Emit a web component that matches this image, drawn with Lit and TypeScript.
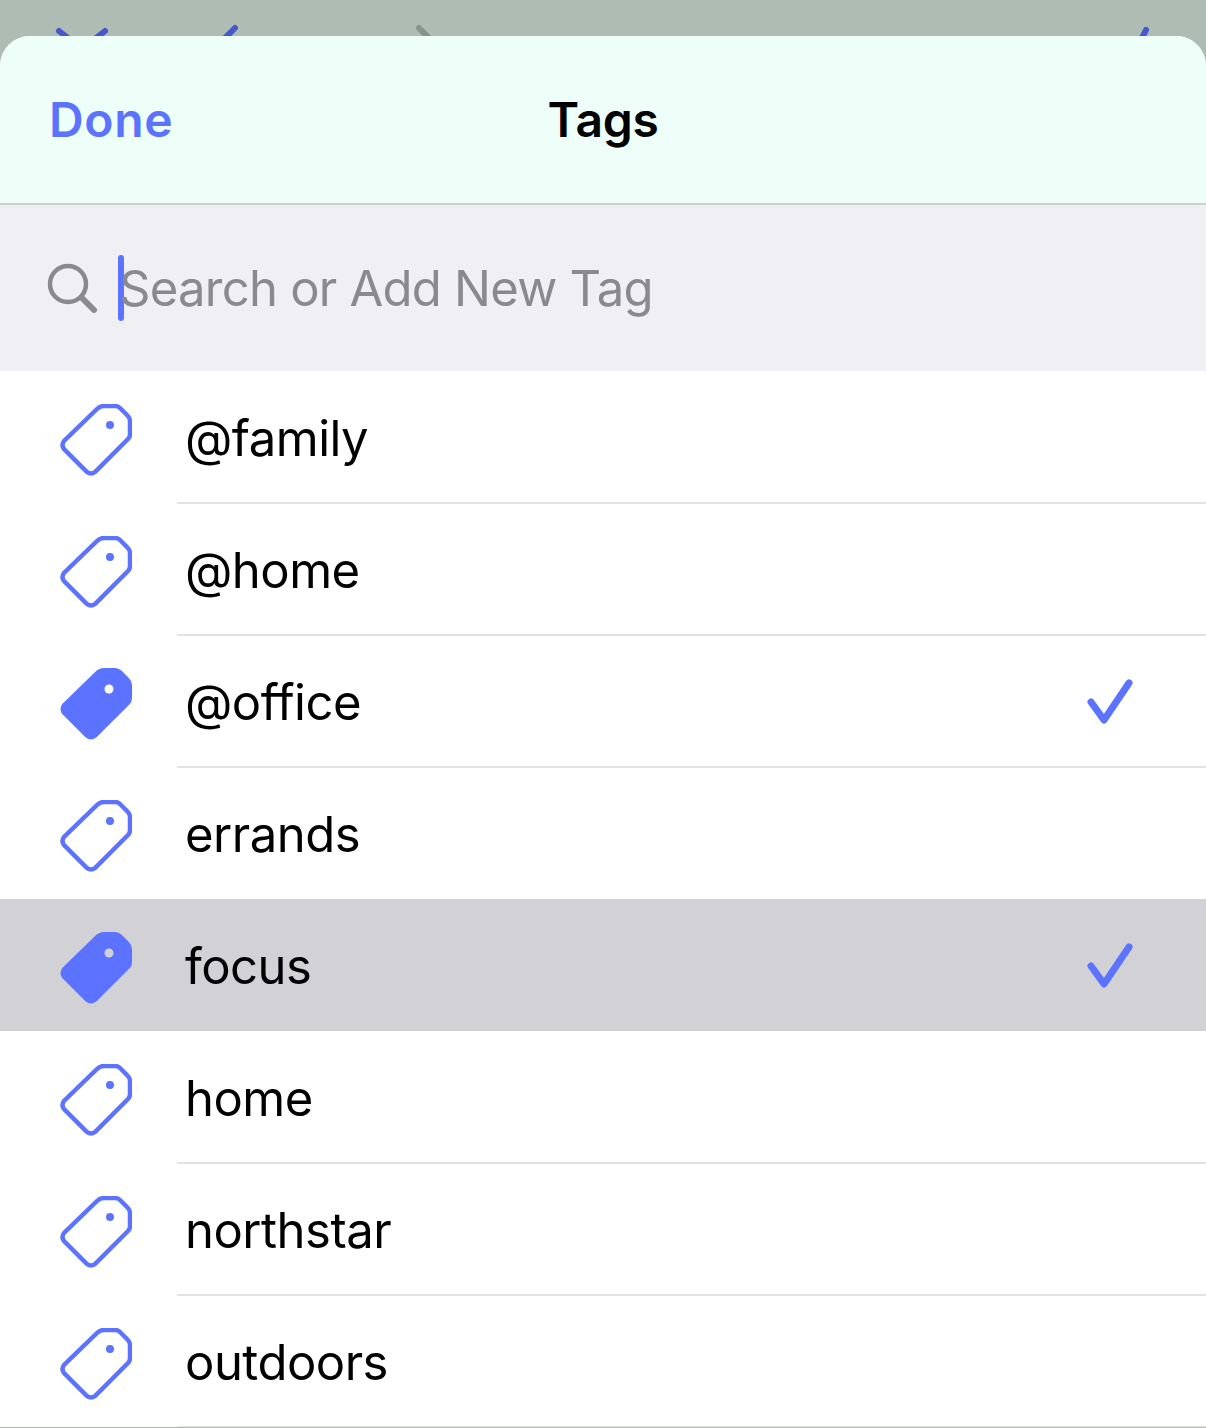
import { LitElement, html, css, svg } from 'lit';
import { customElement } from 'lit/decorators.js';

const TAG_PATH = 'M37 5Q40 2 44 2H55Q58 2 60 4L67 11Q70 14 70 17V30Q70 33 68 35L35 68Q31 71 27 68L4 45Q1 41 4 37Z';

const tags = [
  { name: '@family', on: false },
  { name: '@home', on: false },
  { name: '@office', on: true },
  { name: 'errands', on: false },
  { name: 'focus', on: true, pressed: true },
  { name: 'home', on: false },
  { name: 'northstar', on: false },
  { name: 'outdoors', on: false },
];

@customElement('app-root')
export class AppRoot extends LitElement {
  static styles = css`
    :host {
      display: block;
      height: 1428px;
      overflow: hidden;
      background: #afbcb3;
      font-family: Inter, "Liberation Sans", sans-serif;
    }

    .peek {
      display: block;
      width: 1206px;
      height: 36px;
    }

    .sheet {
      background: #ffffff;
      border-radius: 30px 30px 0 0;
      overflow: hidden;
    }

    .nav {
      height: 167px;
      background: #eefffa;
      border-bottom: 2px solid #cbcfcd;
      display: grid;
      grid-template-columns: 1fr auto 1fr;
      align-items: center;
      padding: 0 49px;
      font-size: 48px;
      letter-spacing: -0.3px;
      font-weight: 600;
    }

    .done {
      color: #5b73ff;
      letter-spacing: 0.7px;
    }

    .title {
      color: #000000;
    }

    .search {
      height: 166px;
      background: #efeff4;
      display: flex;
      align-items: center;
      padding-left: 47px;
    }

    .search svg {
      width: 51px;
      height: 51px;
      flex: none;
    }

    .caret {
      width: 6px;
      height: 66px;
      border-radius: 3px;
      background: #5b73ff;
      margin-left: 20px;
      flex: none;
    }

    .placeholder {
      margin-left: -5px;
      font-size: 49px;
      letter-spacing: -0.75px;
      color: #8a8a8e;
    }

    .row {
      height: 132px;
      display: flex;
      align-items: center;
      padding: 2px 0 0 60px;
      box-sizing: border-box;
      position: relative;
    }

    .row.pressed {
      background: #d1d1d6;
    }

    .row:not(.pressed):not(.before-pressed)::after {
      content: '';
      position: absolute;
      left: 177px;
      right: 0;
      bottom: -1px;
      height: 2px;
      background: #e2e2e4;
    }

    .tag {
      width: 72px;
      height: 72px;
      margin-top: 4px;
      flex: none;
    }

    .hole {
      fill: #ffffff;
    }

    .pressed .hole {
      fill: #d1d1d6;
    }

    .name {
      margin-left: 53px;
      font-size: 49px;
      letter-spacing: -0.5px;
      color: #000000;
      flex: 1;
    }

    .check {
      width: 48px;
      height: 48px;
      margin-right: 72px;
      flex: none;
    }
  `;

  private renderTag(on: boolean) {
    return html`<svg class="tag" viewBox="0 0 72 72">
      ${on
        ? svg`<path d="${TAG_PATH}" fill="#5b73ff" stroke="#5b73ff" stroke-width="4"/>
              <circle class="hole" cx="49" cy="21" r="4.5"/>`
        : svg`<path d="${TAG_PATH}" fill="none" stroke="#5b73ff" stroke-width="4.5"/>
              <circle cx="50" cy="21" r="4" fill="#5b73ff"/>`}
    </svg>`;
  }

  render() {
    return html`
      <svg class="peek" viewBox="0 0 1206 36" fill="none" stroke-width="6" stroke-linecap="round">
        <path d="M59 31L68 38M105 31L96 38M235 28L224 39M1146 30L1141 40" stroke="#4559cb"/>
        <path d="M419 28L429 38" stroke="#87938b"/>
      </svg>
      <div class="sheet">
        <div class="nav">
          <span class="done">Done</span>
          <span class="title">Tags</span>
          <span></span>
        </div>
        <div class="search">
          <svg viewBox="0 0 51 51" fill="none" stroke="#8a8a8e" stroke-linecap="round">
            <circle cx="21" cy="21" r="18" stroke-width="4.5"/>
            <path d="M34.5 34.5L47 47" stroke-width="6"/>
          </svg>
          <span class="caret"></span>
          <span class="placeholder">Search or Add New Tag</span>
        </div>
        ${tags.map((t, i) => html`
          <div class="row ${t.pressed ? 'pressed' : ''} ${tags[i + 1]?.pressed ? 'before-pressed' : ''}">
            ${this.renderTag(t.on)}
            <span class="name">${t.name}</span>
            ${t.on ? html`<svg class="check" viewBox="0 0 48 48" fill="none" stroke="#5b73ff" stroke-width="7" stroke-linecap="round" stroke-linejoin="round">
              <path d="M5 24L18 42L43 5"/>
            </svg>` : ''}
          </div>
        `)}
      </div>
    `;
  }
}
